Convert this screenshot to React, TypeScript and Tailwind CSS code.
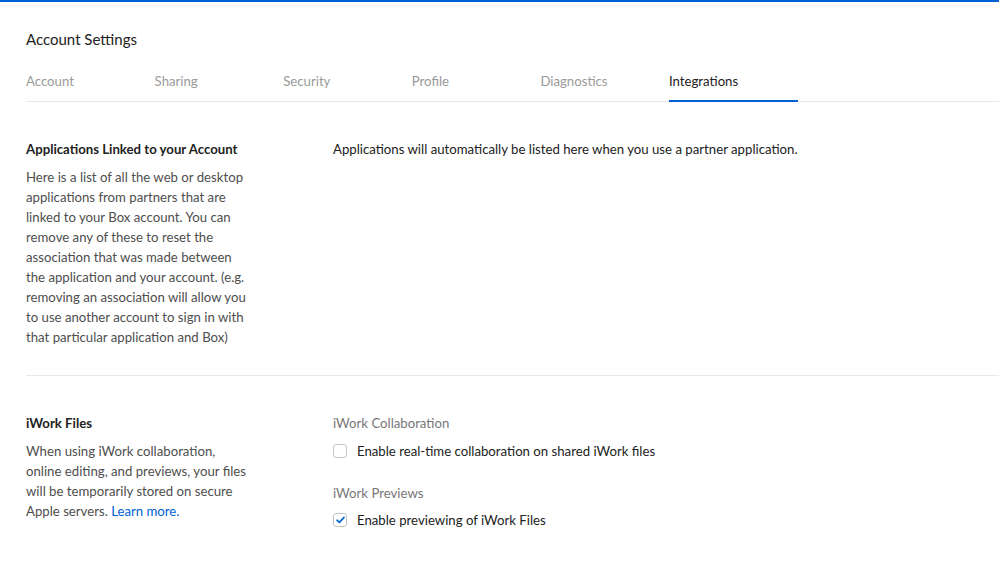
const tabs = ['Account', 'Sharing', 'Security', 'Profile', 'Diagnostics', 'Integrations'];

const Checkbox = ({ checked }: { checked: boolean }) => (
  <span className="flex h-[14px] w-[14px] items-center justify-center rounded-[3px] border border-[#c4c4c4] bg-white">
    {checked && (
      <svg width="9" height="8" viewBox="0 0 9 8" fill="none">
        <path d="M1 4.2 L3.4 6.4 L8 1.4" stroke="#0061d5" strokeWidth="1.6" strokeLinecap="round" strokeLinejoin="round" />
      </svg>
    )}
  </span>
);

const App = () => {
  return (
    <div className="min-h-[581px] w-[999px] overflow-hidden bg-white font-['Lato','Liberation_Sans',sans-serif] text-[13.2px] text-[#222]">
      <div className="h-[2px] bg-[#0061d5]" />

      <div className="pl-[26px]">
        <h1 className="pt-[27px] text-[15px] leading-[20px] text-[#222]">Account Settings</h1>

        <div className="mt-[23px] flex border-b border-[#e8e8e8]">
          {tabs.map((t) => (
            <div
              key={t}
              className={`-mb-px w-[128.6px] shrink-0 pb-[10px] text-[13.2px] leading-[18px] ${
                t === 'Integrations' ? 'border-b-2 border-[#0061d5] text-[#222]' : 'border-b-2 border-transparent text-[#9a9a9a]'
              }`}
            >
              {t}
            </div>
          ))}
        </div>

        <div className="flex border-b border-[#e8e8e8] pt-[37px] pb-[28px]">
          <div className="w-[307px] shrink-0">
            <h2 className="font-bold leading-[20px] text-[#222]">Applications Linked to your Account</h2>
            <p className="mt-[8px] w-[226px] leading-[20px] text-[#4e4e4e]">
              Here is a list of all the web or desktop applications from partners that are linked to your Box account. You can remove any of these to reset the association that was made between the application and your account. (e.g. removing an association will allow you to use another account to sign in with that particular application and Box)
            </p>
          </div>
          <p className="leading-[20px] text-[#222]">
            Applications will automatically be listed here when you use a partner application.
          </p>
        </div>

        <div className="flex pt-[37px]">
          <div className="w-[307px] shrink-0">
            <h2 className="font-bold leading-[20px] text-[#222]">iWork Files</h2>
            <p className="mt-[8px] w-[226px] leading-[20px] text-[#4e4e4e]">
              When using iWork collaboration, online editing, and previews, your files will be temporarily stored on secure Apple servers.{' '}
              <a className="text-[#0061d5]">Learn more.</a>
            </p>
          </div>
          <div>
            <div className="leading-[20px] text-[#777]">iWork Collaboration</div>
            <label className="mt-[8px] flex items-center gap-[10px] leading-[20px] text-[#222]">
              <Checkbox checked={false} />
              Enable real-time collaboration on shared iWork files
            </label>
            <div className="mt-[22px] leading-[20px] text-[#777]">iWork Previews</div>
            <label className="mt-[7px] flex items-center gap-[10px] leading-[20px] text-[#222]">
              <Checkbox checked={true} />
              Enable previewing of iWork Files
            </label>
          </div>
        </div>
      </div>
    </div>
  );
};

export default App;
